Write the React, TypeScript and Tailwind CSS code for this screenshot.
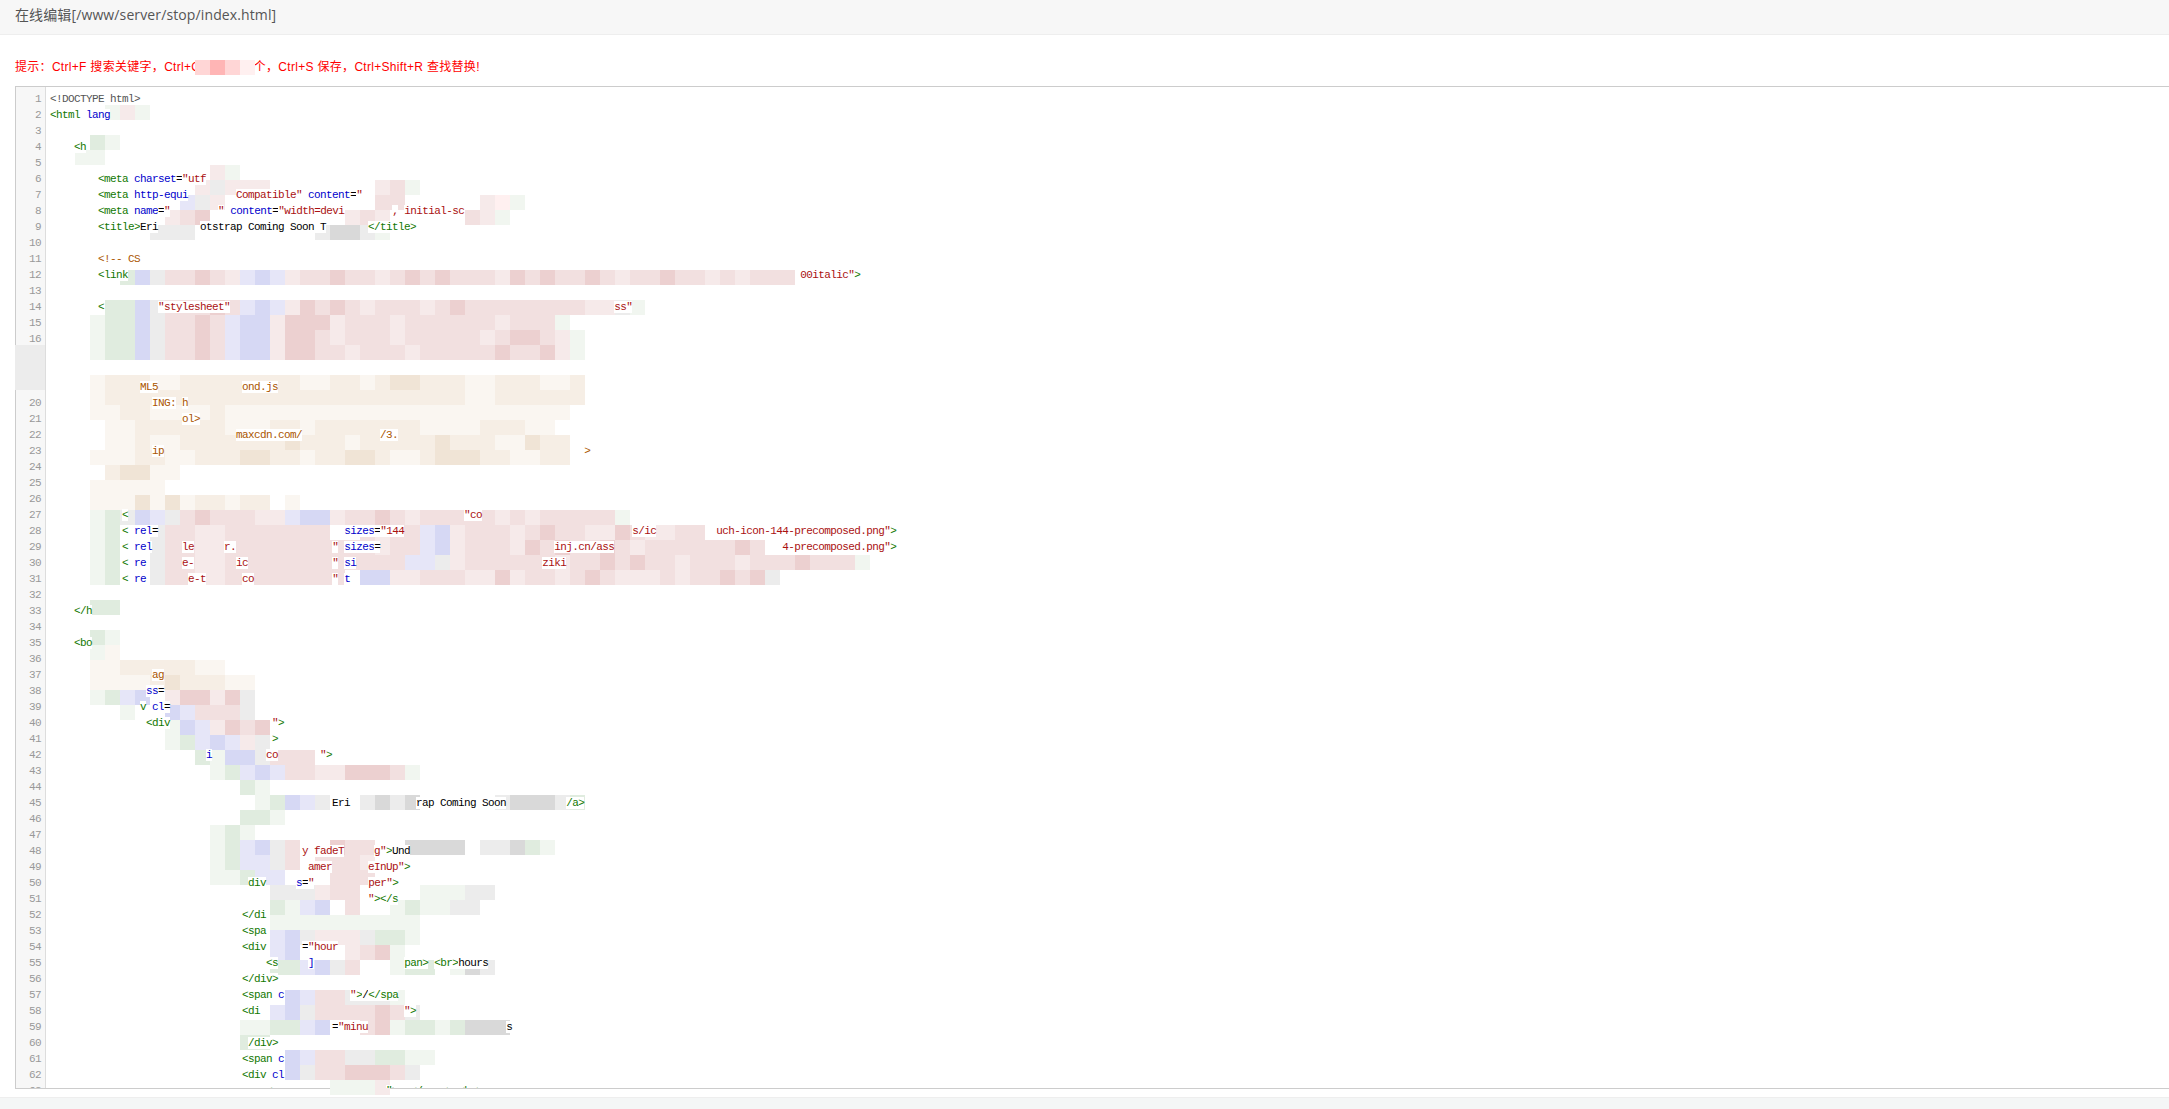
const cellColor: Record<string, string> = {
  g: 'bg-[#e0ecdf]',
  h: 'bg-[#f1f6f0]',
  b: 'bg-[#d6d8f4]',
  c: 'bg-[#e6e6f8]',
  r: 'bg-[#f2e0e0]',
  R: 'bg-[#ecd0d0]',
  s: 'bg-[#f6eaea]',
  y: 'bg-[#ececec]',
  k: 'bg-[#d9d9d9]',
  o: 'bg-[#f6eee5]',
  O: 'bg-[#f0e4d6]',
  p: 'bg-[#faf6f1]',
  w: 'bg-white',
  P: 'bg-[#ffb5b5]',
  q: 'bg-[#ffd6d6]',
  t: 'bg-[#fff0f0]',
  '.': '',
}

// [row, col, cells] on the 15px grid of the redaction
const mosaic: [number, number, string][] = [
  [4, 13, 'qPqt'],
  [7, 7, 'hsh'],
  [9, 6, 'gh'],
  [10, 5, 'hh'],
  [11, 14, 'sh'],
  [12, 13, 'sysss'],
  [12, 25, 'srh'],
  [13, 12, 'cysw'],
  [13, 25, 'rr.....sth'],
  [14, 11, 'srR'],
  [14, 23, 'srs'],
  [14, 31, 'rsh'],
  [15, 10, 'yyy'],
  [15, 21, 'ykkyh'],
  [18, 8, 'gbyrrRrscbcsrrRrrsrRrRrrrsRrRrrRrsrrRrrsrsrrr'],
  [20, 7, 'ggbyrrrRrcbcsRrRrsrrrsrRrrrrrrrrssyh'],
  [21, 6, 'hggbyrrRrcbbsRRRsrrrsrrrrrrsrrrh'],
  [22, 6, 'hggbyrrRrcbbsRRrsrrrsrrrrrsrRRrsh'],
  [23, 6, 'hggbyrrRrcbbsRRrrsrrrsrrrrrRrrRsh'],
  [23, 1, 'yy'],
  [24, 1, 'yy'],
  [25, 1, 'yy'],
  [25, 6, 'poooppooooooooppoopoOOoooppoooppo'],
  [26, 6, 'pooooooooooooooooooooooooppoooooo'],
  [27, 6, 'ppooppppoppppppppppppppppppppppp'],
  [28, 6, 'wppoooooopppoopoooooooppppooopp'],
  [29, 6, '.ppoppoooooooOooopoooooOoooppOoo'],
  [30, 6, 'pppooppoooOOoopooOOoppoOOOooppoo'],
  [31, 7, 'oOOpp'],
  [32, 6, 'ppppp'],
  [33, 6, 'pppOpOpoopoowp'],
  [34, 6, 'hgybcyrRrrrsscbbsrrRrsrrrrrsrsrrrrrh'],
  [35, 6, 'hgwwyrrssrrrrrrrwwrsrrcbsrrrsrRrrssRrssrr'],
  [36, 6, 'hgwwyrrssrrrrrrrrrrsrrcbsrrrsRrRrrRrsrrrrrrRr'],
  [37, 6, 'hgwwyrrssrrrrrrrrrrrrccysrrrrrrsrrRrRrrsrrrsrrrRrrrh'],
  [38, 6, 'hgwwyrrssrrrrrrrrwbbssrrrssRsrrsrRrsssrsrrRrRy'],
  [40, 6, 'gg'],
  [42, 6, 'gh'],
  [43, 6, 'hp'],
  [44, 6, 'ppooooopp'],
  [45, 6, 'ppppoOooopp'],
  [46, 6, 'hgcbwsRRsRy'],
  [47, 8, 'hwwbcrrry'],
  [48, 11, 'hbcsRrR'],
  [49, 11, 'hgcbcsy'],
  [50, 13, 'ghbbyrrr'],
  [51, 14, 'hgcbcrrssRRRrh'],
  [52, 16, 'gh'],
  [53, 17, 'hgbcywwyky'],
  [53, 27, 'k'],
  [53, 33, 'ykkkyg'],
  [54, 16, 'ggh'],
  [55, 14, 'hgh'],
  [56, 14, 'hgcbyr..Rrr'],
  [56, 27, 'kkkk.yyk'],
  [56, 35, 'gh'],
  [57, 14, 'hgccyr'],
  [57, 21, 'rrrs'],
  [58, 14, 'hhgcc'],
  [58, 22, 'rrr'],
  [59, 18, 'yyysrr'],
  [59, 28, 'hhhyy'],
  [60, 18, 'ghcb'],
  [60, 23, 'r'],
  [60, 26, 'hghhyy'],
  [61, 18, 'hhhhhhhhhh'],
  [62, 18, 'cbysssyggh'],
  [63, 18, 'cb'],
  [63, 23, 'srRh'],
  [64, 18, 'ggcbyr'],
  [64, 26, 'hgg.hky'],
  [66, 19, 'bcrryyyh'],
  [67, 18, 'cbyrrrrRry'],
  [68, 16, 'hhggcb'],
  [68, 24, 'rRhgghgkkk'],
  [69, 16, 'gg'],
  [70, 19, 'bcrryygghh'],
  [71, 19, 'byrrRRRry'],
  [72, 22, 'hhhs'],
]

const tokenColor: Record<string, string> = {
  d: 'text-[#555555]',
  t: 'text-[#117700]',
  a: 'text-[#0000cc]',
  s: 'text-[#aa1111]',
  c: 'text-[#aa5500]',
  n: 'text-black',
}

type Frag = [number, string, string]

// what is still readable on each line: [column, text, token]
const code: Record<number, Frag[]> = {
  1: [[0, '<!DOCTYPE html>', 'd']],
  2: [[0, '<html', 't'], [6, 'lang', 'a']],
  4: [[4, '<h', 't']],
  6: [[8, '<meta', 't'], [14, 'charset', 'a'], [21, '=', 'n'], [22, '"utf', 's']],
  7: [[8, '<meta', 't'], [14, 'http-equi', 'a'], [31, 'Compatible"', 's'], [43, 'content', 'a'], [50, '=', 'n'], [51, '"', 's']],
  8: [[8, '<meta', 't'], [14, 'name', 'a'], [18, '=', 'n'], [19, '"', 's'], [28, '"', 's'], [30, 'content', 'a'], [37, '=', 'n'], [38, '"width=devi', 's'], [57, ',', 's'], [59, 'initial-sc', 's']],
  9: [[8, '<title>', 't'], [15, 'Eri', 'n'], [25, 'otstrap Coming Soon T', 'n'], [53, '</title>', 't']],
  11: [[8, '<!-- CS', 'c']],
  12: [[8, '<link', 't'], [125, '00italic"', 's'], [134, '>', 't']],
  14: [[8, '<', 't'], [18, '"stylesheet"', 's'], [94, 'ss"', 's']],
  19: [[15, 'ML5', 'c'], [32, 'ond.js', 'c']],
  20: [[17, 'ING:', 'c'], [22, 'h', 'c']],
  21: [[22, 'ol>', 'c']],
  22: [[31, 'maxcdn.com/', 'c'], [55, '/3.', 'c']],
  23: [[17, 'ip', 'c'], [89, '>', 'c']],
  27: [[12, '<', 't'], [69, '"co', 's']],
  28: [[12, '<', 't'], [14, 'rel', 'a'], [17, '=', 'n'], [49, 'sizes', 'a'], [54, '=', 'n'], [55, '"144', 's'], [97, 's/ic', 's'], [111, 'uch-icon-144-precomposed.png"', 's'], [140, '>', 't']],
  29: [[12, '<', 't'], [14, 'rel', 'a'], [22, 'le', 's'], [29, 'r.', 's'], [47, '"', 's'], [49, 'sizes', 'a'], [54, '=', 'n'], [84, 'inj.cn/ass', 's'], [122, '4-precomposed.png"', 's'], [140, '>', 't']],
  30: [[12, '<', 't'], [14, 're', 'a'], [22, 'e-', 's'], [31, 'ic', 's'], [47, '"', 's'], [49, 'si', 'a'], [82, 'ziki', 's']],
  31: [[12, '<', 't'], [14, 're', 'a'], [23, 'e-t', 's'], [32, 'co', 's'], [47, '"', 's'], [49, 't', 'a']],
  33: [[4, '</h', 't']],
  35: [[4, '<bo', 't']],
  37: [[17, 'ag', 'c']],
  38: [[16, 'ss', 'a'], [18, '=', 'n']],
  39: [[15, 'v', 't'], [17, 'cl', 'a'], [19, '=', 'n']],
  40: [[16, '<div', 't'], [37, '"', 's'], [38, '>', 't']],
  41: [[37, '>', 't']],
  42: [[26, 'i', 'a'], [36, 'co', 's'], [45, '"', 's'], [46, '>', 't']],
  45: [[47, 'Eri', 'n'], [61, 'rap Coming Soon', 'n'], [86, '/a>', 't']],
  48: [[42, 'y fadeT', 's'], [54, 'g"', 's'], [56, '>', 't'], [57, 'Und', 'n']],
  49: [[43, 'amer', 's'], [53, 'eInUp"', 's'], [59, '>', 't']],
  50: [[33, 'div', 't'], [41, 's', 'a'], [42, '=', 'n'], [43, '"', 's'], [53, 'per"', 's'], [57, '>', 't']],
  51: [[53, '"', 's'], [54, '></s', 't']],
  52: [[32, '</di', 't']],
  53: [[32, '<spa', 't']],
  54: [[32, '<div', 't'], [42, '=', 'n'], [43, '"hour', 's']],
  55: [[36, '<s', 't'], [43, ']', 'a'], [59, 'pan>', 't'], [64, '<br>', 't'], [68, 'hours', 'n']],
  56: [[32, '</div>', 't']],
  57: [[32, '<span', 't'], [38, 'c', 'a'], [50, '"', 's'], [51, '>', 't'], [52, '/', 'n'], [53, '</spa', 't']],
  58: [[32, '<di', 't'], [59, '"', 's'], [60, '>', 't']],
  59: [[47, '=', 'n'], [48, '"minu', 's'], [76, 's', 'n']],
  60: [[33, '/div>', 't']],
  61: [[32, '<span', 't'], [38, 'c', 'a']],
  62: [[32, '<div', 't'], [37, 'cl', 'a']],
  63: [[36, '<span', 't'], [42, 'c', 'a'], [56, '">', 't'], [60, '</span>', 't'], [68, '<br>', 't']],
}

const lineNumbers = Array.from({ length: 63 }, (_, i) => i + 1)

function CodeLine({ frags }: { frags: Frag[] }) {
  let cursor = 0
  return (
    <div className="h-4 leading-4 whitespace-pre">
      {frags.map(([col, text, token], i) => {
        const gap = ' '.repeat(Math.max(col - cursor, 0))
        cursor = col + text.length
        return (
          <span key={i}>
            {gap}
            <span className={`relative z-[2] bg-white ${tokenColor[token]}`}>{text}</span>
          </span>
        )
      })}
    </div>
  )
}

export default function App() {
  return (
    <div className="relative flex h-screen flex-col overflow-hidden bg-white font-['Liberation_Sans','Noto_Sans_CJK_SC',sans-serif]">
      <div className="h-[35px] shrink-0 border-b border-[#eeeeee] bg-[#f7f7f7] pl-[15px] text-sm leading-[30px] tracking-[0.12px] text-[#555555] font-['Open_Sans','Noto_Sans_CJK_SC',sans-serif]">
        在线编辑[/www/server/stop/index.html]
      </div>

      <div className="h-[51px] shrink-0 pt-6 pl-[15px] text-xs leading-4 tracking-[0.3px] text-[#ff0000]">
        提示：Ctrl+F 搜索关键字，Ctrl+G 查找下一个，Ctrl+S 保存，Ctrl+Shift+R 查找替换!
      </div>

      <div className="ml-[15px] flex min-h-0 flex-1 overflow-hidden border-y border-l border-[#cccccc] font-['Liberation_Mono',monospace] text-[11px] tracking-[-0.6px]">
        <div className="w-[30px] shrink-0 border-r border-[#dddddd] bg-[#f7f7f7] pt-1 pr-1 text-right text-[#999999]">
          {lineNumbers.map((n) => (
            <div key={n} className="h-4 leading-4">{n}</div>
          ))}
        </div>
        <div className="min-w-0 flex-1 pt-1 pl-1">
          {lineNumbers.map((n) => (
            <CodeLine key={n} frags={code[n] ?? []} />
          ))}
        </div>
      </div>

      <div className="mt-2 h-3 shrink-0 border-t border-[#eeeeee] bg-[#f4f6f6]" />

      {/* pixelated redaction, over the page but under the readable fragments */}
      <div className="pointer-events-none absolute inset-0 z-[1]">
        {mosaic.map(([row, col, cells]) => (
          <div key={`${row}-${col}`} className="absolute flex" style={{ top: row * 15, left: col * 15 }}>
            {cells.split('').map((c, i) => (
              <div key={i} className={`h-[15px] w-[15px] shrink-0 ${cellColor[c]}`} />
            ))}
          </div>
        ))}
      </div>
    </div>
  )
}
